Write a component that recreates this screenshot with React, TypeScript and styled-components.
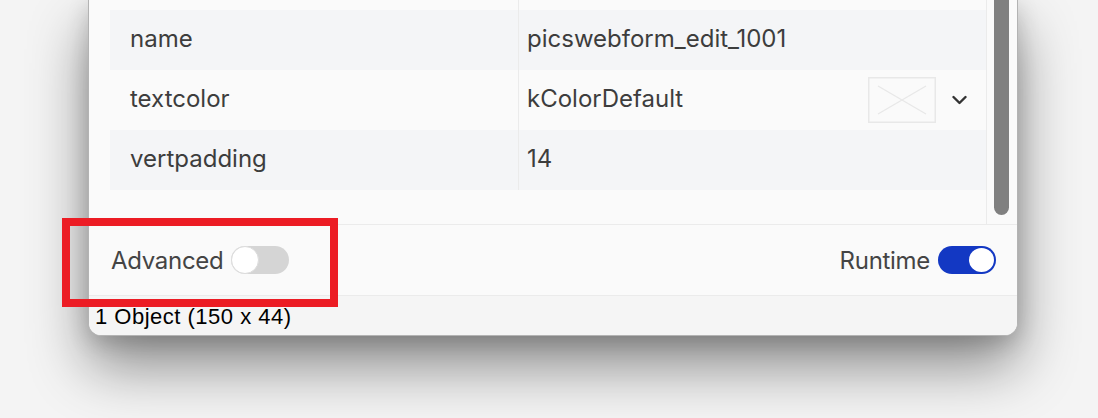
import React from "react";
import styled, { createGlobalStyle } from "styled-components";

const Global = createGlobalStyle`
  html, body { margin: 0; padding: 0; background: #f3f3f3; }
  body { font-family: Inter, "Liberation Sans", sans-serif; }
`;

const Page = styled.div`
  position: relative;
  width: 1098px;
  height: 418px;
  overflow: hidden;
  box-sizing: border-box;
  padding-left: 88px;
  background: #f4f4f4;
`;

const Window = styled.div`
  width: 930px;
  height: 336px;
  box-sizing: border-box;
  border: 1px solid #b3b3b3;
  border-top: none;
  border-radius: 0 0 13px 13px;
  background: #fafafa;
  box-shadow: 0 30px 58px rgba(0, 0, 0, 0.44), 0 6px 22px rgba(0, 0, 0, 0.16);
  display: flex;
  flex-direction: column;
  overflow: hidden;
`;

const Body = styled.div`
  display: flex;
  height: 224px;
`;

const TableArea = styled.div`
  flex: 1;
  padding-left: 21px;
  overflow: hidden;
`;

const Table = styled.div`
  display: flex;
  flex-direction: column;
`;

const Row = styled.div<{ $shade?: boolean; $h?: number }>`
  display: grid;
  grid-template-columns: 409px 1fr;
  height: ${(p) => p.$h ?? 60}px;
  background: ${(p) => (p.$shade ? "#f4f5f7" : "#fafafa")};
`;

const KeyCell = styled.div`
  display: flex;
  align-items: center;
  padding: 0 0 4px 20px;
  border-right: 1px solid #ebebeb;
  font-size: 24px;
  color: #3d3d3d;
`;

const ValueCell = styled.div`
  display: flex;
  align-items: center;
  padding: 0 19px 4px 8px;
  font-size: 24px;
  color: #3d3d3d;
`;

const Swatch = styled.svg`
  margin: 4px 0 0 auto;
  width: 68px;
  height: 46px;
  display: block;
`;

const Chevron = styled.svg`
  margin: 4px 0 0 16px;
  width: 15px;
  height: 10px;
  display: block;
`;

const ScrollTrack = styled.div`
  width: 30px;
  border-left: 1px solid #ebebeb;
`;

const Thumb = styled.div`
  margin-left: 7px;
  width: 15px;
  height: 215px;
  background: #808080;
  border-radius: 0 0 8px 8px;
`;

const Toolbar = styled.div`
  height: 70px;
  border-top: 1px solid #ebebeb;
  display: flex;
  align-items: center;
  justify-content: space-between;
  padding: 0 21px 0 22px;
`;

const ToggleGroup = styled.label`
  display: flex;
  align-items: center;
  gap: 8px;
  font-size: 24px;
  letter-spacing: -0.3px;
  color: #444;
`;

const Toggle = styled.span<{ $on?: boolean }>`
  display: flex;
  align-items: center;
  justify-content: ${(p) => (p.$on ? "flex-end" : "flex-start")};
  width: 58px;
  height: 28px;
  box-sizing: border-box;
  padding: 2px;
  border-radius: 14px;
  background: ${(p) => (p.$on ? "#1338c3" : "#d5d5d5")};
`;

const Knob = styled.span<{ $on?: boolean }>`
  width: ${(p) => (p.$on ? 25 : 28)}px;
  height: ${(p) => (p.$on ? 24 : 28)}px;
  margin: ${(p) => (p.$on ? "0" : "-2px 0 -2px -2px")};
  box-sizing: border-box;
  border-radius: 50%;
  background: #fff;
  border: ${(p) => (p.$on ? "none" : "1.5px solid #dcdcdc")};
`;

const StatusBar = styled.div`
  flex: 1;
  border-top: 1px solid #ebebeb;
  background: #f5f5f5;
  padding: 10px 0 0 6px;
  font-family: "Liberation Sans", Arial, sans-serif;
  font-size: 22px;
  line-height: 1;
  letter-spacing: 0.5px;
  color: #000;
`;

const Highlight = styled.div`
  position: absolute;
  left: 62px;
  top: 218px;
  width: 276px;
  height: 89px;
  box-sizing: border-box;
  border: 8px solid #ec1c24;
  pointer-events: none;
`;

const rows = [
  { key: "name", value: "picswebform_edit_1001" },
  { key: "textcolor", value: "kColorDefault", color: true },
  { key: "vertpadding", value: "14" },
];

export default function App() {
  return (
    <Page>
      <Global />
      <Window>
        <Body>
          <TableArea>
            <Table>
              <Row $h={10}>
                <KeyCell />
                <ValueCell />
              </Row>
              {rows.map((r, i) => (
                <Row key={r.key} $shade={i % 2 === 0}>
                  <KeyCell>{r.key}</KeyCell>
                  <ValueCell>
                    {r.value}
                    {r.color && (
                      <>
                        <Swatch viewBox="0 0 68 46">
                          <rect x="0.75" y="0.75" width="66.5" height="44.5" fill="#fafafa" stroke="#e8e8e8" strokeWidth="1.5" />
                          <line x1="10" y1="9" x2="58" y2="37" stroke="#e8e8e8" strokeWidth="1.3" />
                          <line x1="10" y1="37" x2="58" y2="9" stroke="#e8e8e8" strokeWidth="1.3" />
                        </Swatch>
                        <Chevron viewBox="0 0 15 10">
                          <polyline points="1.5,2 7.5,8 13.5,2" fill="none" stroke="#333" strokeWidth="2.4" strokeLinecap="round" strokeLinejoin="round" />
                        </Chevron>
                      </>
                    )}
                  </ValueCell>
                </Row>
              ))}
            </Table>
          </TableArea>
          <ScrollTrack>
            <Thumb />
          </ScrollTrack>
        </Body>
        <Toolbar>
          <ToggleGroup>
            Advanced
            <Toggle>
              <Knob />
            </Toggle>
          </ToggleGroup>
          <ToggleGroup>
            Runtime
            <Toggle $on>
              <Knob $on />
            </Toggle>
          </ToggleGroup>
        </Toolbar>
        <StatusBar>1 Object (150 x 44)</StatusBar>
      </Window>
      <Highlight />
    </Page>
  );
}
